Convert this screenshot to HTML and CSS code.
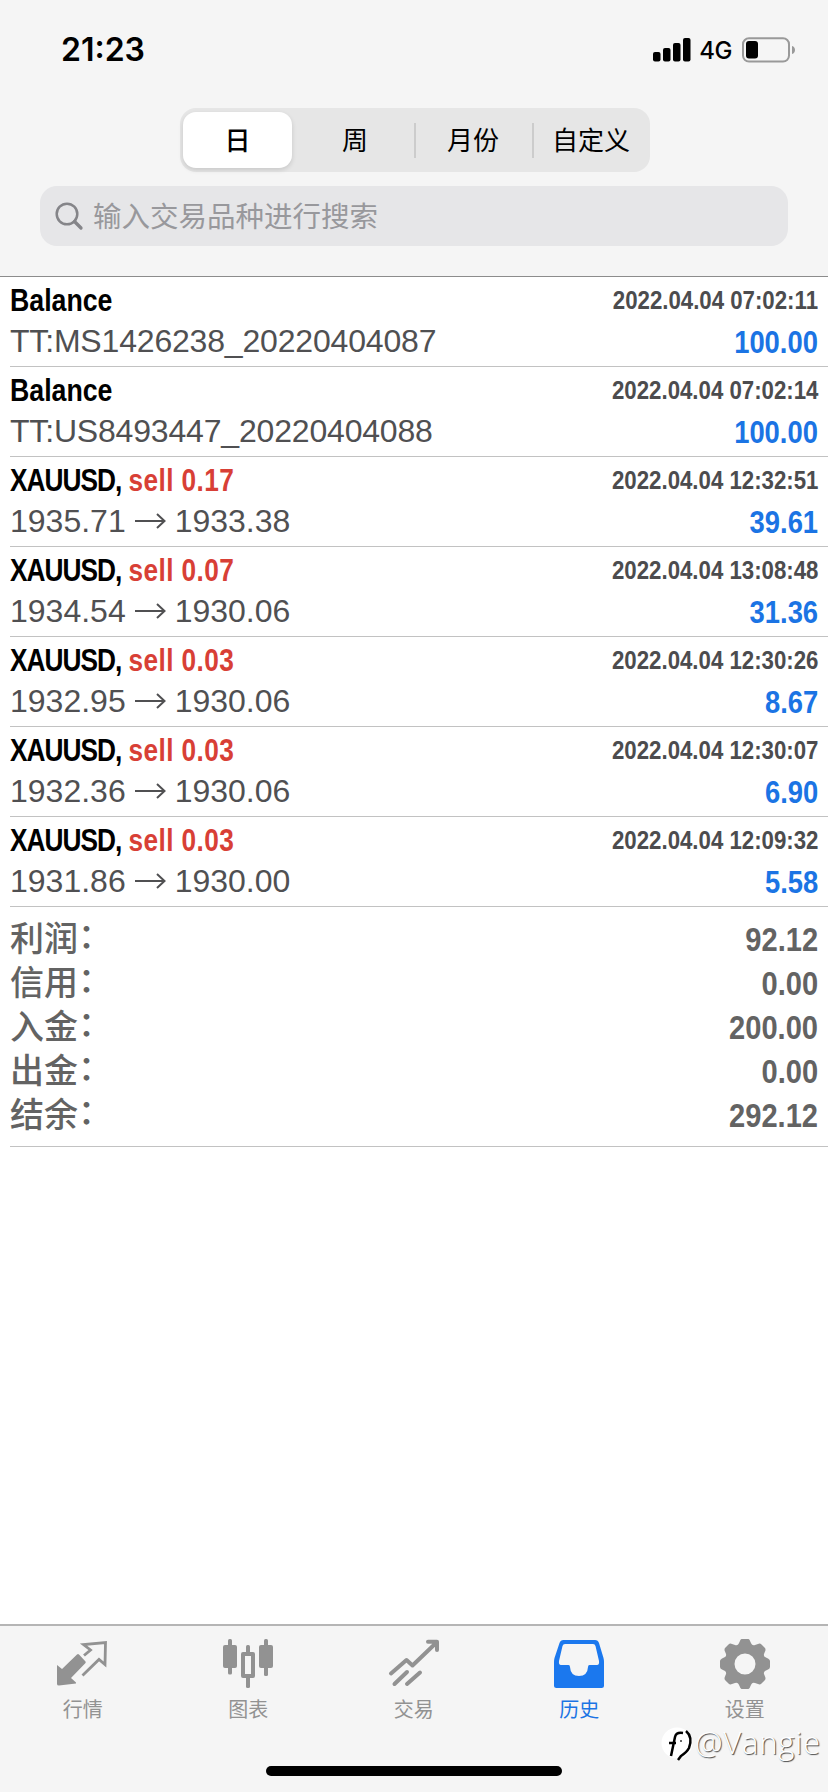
FILE: index.html
```
<!DOCTYPE html>
<html lang="zh-CN">
<head>
<meta charset="utf-8">
<title>历史</title>
<link rel="stylesheet" href="styles.css">
</head>
<body>
<div class="app">
  <header class="header">
    <div class="status">
      <span class="clock">21:23</span>
      <div class="status-right">
        <svg class="signal" width="38" height="24" viewBox="0 0 38 24"><rect x="0" y="14" width="7.5" height="9.500" rx="2"/><rect x="10" y="10" width="7.500" height="13.500" rx="2"/><rect x="20" y="5" width="7.500" height="18.500" rx="2"/><rect x="30" y="0" width="7.500" height="23.500" rx="2"/></svg>
        <span class="network">4G</span>
        <svg class="battery" width="54" height="26" viewBox="0 0 54 26"><rect x="1" y="1.200" width="46" height="23.400" rx="6" fill="none" stroke="#999" stroke-width="2"/><rect x="4" y="4" width="12" height="17.500" rx="3"/><path d="M50 9c4 1 4 7 0 8z" fill="#999"/></svg>
      </div>
    </div>
    <nav class="segments">
      <span class="segment selected">日</span>
      <span class="segment">周</span>
      <span class="segment divided">月份</span>
      <span class="segment divided">自定义</span>
    </nav>
    <div class="search">
      <svg width="30" height="30" viewBox="0 0 30 30" fill="none" stroke="#858589"><circle cx="12" cy="12" r="10.300" stroke-width="2.500"/><path d="M19.500 19.500L26 26" stroke-width="3.300" stroke-linecap="round"/></svg>
      <span>输入交易品种进行搜索</span>
    </div>
  </header>

  <main class="content">
    <section class="deal"><div class="line"><b class="name balance">Balance</b><span class="time">2022.04.04 07:02:11</span></div><div class="line"><span class="detail ref">TT:MS1426238_20220404087</span><span class="amount">100.00</span></div></section>
    <section class="deal"><div class="line"><b class="name balance">Balance</b><span class="time">2022.04.04 07:02:14</span></div><div class="line"><span class="detail ref">TT:US8493447_20220404088</span><span class="amount">100.00</span></div></section>
    <section class="deal"><div class="line"><b class="name"><span class="symbol">XAUUSD,</span> <span class="sell">sell 0.17</span></b><span class="time">2022.04.04 12:32:51</span></div><div class="line"><span class="detail">1935.71<svg class="arrow" viewBox="0 0 32 18"><path d="M1 9H30M23 2L30.500 9L23 16"/></svg>1933.38</span><span class="amount">39.61</span></div></section>
    <section class="deal"><div class="line"><b class="name"><span class="symbol">XAUUSD,</span> <span class="sell">sell 0.07</span></b><span class="time">2022.04.04 13:08:48</span></div><div class="line"><span class="detail">1934.54<svg class="arrow" viewBox="0 0 32 18"><path d="M1 9H30M23 2L30.500 9L23 16"/></svg>1930.06</span><span class="amount">31.36</span></div></section>
    <section class="deal"><div class="line"><b class="name"><span class="symbol">XAUUSD,</span> <span class="sell">sell 0.03</span></b><span class="time">2022.04.04 12:30:26</span></div><div class="line"><span class="detail">1932.95<svg class="arrow" viewBox="0 0 32 18"><path d="M1 9H30M23 2L30.500 9L23 16"/></svg>1930.06</span><span class="amount">8.67</span></div></section>
    <section class="deal"><div class="line"><b class="name"><span class="symbol">XAUUSD,</span> <span class="sell">sell 0.03</span></b><span class="time">2022.04.04 12:30:07</span></div><div class="line"><span class="detail">1932.36<svg class="arrow" viewBox="0 0 32 18"><path d="M1 9H30M23 2L30.500 9L23 16"/></svg>1930.06</span><span class="amount">6.90</span></div></section>
    <section class="deal"><div class="line"><b class="name"><span class="symbol">XAUUSD,</span> <span class="sell">sell 0.03</span></b><span class="time">2022.04.04 12:09:32</span></div><div class="line"><span class="detail">1931.86<svg class="arrow" viewBox="0 0 32 18"><path d="M1 9H30M23 2L30.500 9L23 16"/></svg>1930.00</span><span class="amount">5.58</span></div></section>
    <section class="totals">
      <div class="total"><span>利润<i class="colon">：</i></span><span class="sum">92.12</span></div>
      <div class="total"><span>信用<i class="colon">：</i></span><span class="sum">0.00</span></div>
      <div class="total"><span>入金<i class="colon">：</i></span><span class="sum">200.00</span></div>
      <div class="total"><span>出金<i class="colon">：</i></span><span class="sum">0.00</span></div>
      <div class="total"><span>结余<i class="colon">：</i></span><span class="sum">292.12</span></div>
    </section>
  </main>

  <footer class="tabbar">
    <nav class="tabs">
      <a class="tab"><svg viewBox="0 0 52 52" fill="#929292"><path d="M0 21L5 25L20 10.500Q21 9.500 22 10.500L28.500 17.500Q29 18 28.500 19L14 34L19 38.500V39.500L2 41.500Q0 41.500 0 40Z"/><path d="M27 11.500L33.500 6L26.500 .500L48.500 -1.500L48 20.500L42 15.500L25.500 31.500" fill="none" stroke="#929292" stroke-width="2.800"/></svg><span>行情</span></a>
      <a class="tab"><svg viewBox="0 0 52 52" fill="#929292"><rect x="1" y="1" width="14" height="23" rx="2"/><rect x="6" y="-5" width="4" height="35.500" rx="1.500"/><rect x="37" y="1" width="14" height="23" rx="2"/><rect x="42" y="-5" width="4" height="37" rx="1.500"/><path fill-rule="evenodd" d="M21 8h10q2 0 2 2v22q0 2-2 2H21q-2 0-2-2V10q0-2 2-2M23 12V30H29V12Z"/><rect x="24" y="1" width="4" height="9" rx="1.500"/><rect x="24" y="32" width="4" height="12" rx="1.500"/></svg><span>图表</span></a>
      <a class="tab"><svg viewBox="0 0 52 52" fill="none" stroke="#929292" stroke-width="4" stroke-linecap="round" stroke-linejoin="round"><path d="M3 29.500L18.500 16L24.500 21.500L48 -1M40 -2.200H49V6M6.500 40L19 28M19 40L32 28.500"/></svg><span>交易</span></a>
      <a class="tab active"><svg viewBox="0 0 52 52" fill="#1b78ee"><path fill-rule="evenodd" d="M10.500 -4H42Q45 -4 46 -1L50.500 14Q51 16 51 18V41.500Q51 44 48.500 44H3.500Q1 44 1 41.500V18Q1 16 1.500 14L6.500 -1Q7.500 -4 10.500 -4M12 0Q10 0 9.500 2L6 17Q5.500 21 8 21H15.500Q17 21 17 23Q17.500 32 26 32Q34.500 32 35 23Q35 21 36.500 21H44Q46.500 21 46 17L42.500 2Q42 0 40 0Z"/></svg><span>历史</span></a>
      <a class="tab"><svg viewBox="0 0 52 52"><path fill="#929292" fill-rule="evenodd" d="M22.500 -5H29.500Q30.500 -5 31.500 -2L32.500 0Q34 2 36 1L39 0Q41 -1 42.500 .500L46 4Q47 5.500 46 7.500L45 10Q44.500 12 46 13L49 14.500Q51 15.500 51 17V23Q51 24.500 49 25.500L46 27Q44.500 28 45 30L46 32.500Q47 34.500 46 36L42.500 39.500Q41 41 39 40L36 39Q34 38 32.500 40L31.500 42Q30.500 45 29.500 45H22.500Q21.500 45 20.500 42L19.500 40Q18 38 16 39L13 40Q11 41 9.500 39.500L6 36Q5 34.500 6 32.500L7 30Q7.500 28 6 27L3 25.500Q1 24.500 1 23V17Q1 15.500 3 14.500L6 13Q7.500 12 7 10L6 7.500Q5 5.500 6 4L9.500 .500Q11 -1 13 0L16 1Q18 2 19.500 0L20.500 -2Q21.500 -5 22.500 -5M26 9.500A10.500 10.500 0 1 0 26 30.500A10.500 10.500 0 1 0 26 9.500"/></svg><span>设置</span></a>
    </nav>
    <div class="home"></div>
  </footer>
  <div class="watermark"><svg width="34" height="36" viewBox="0 0 34 36" fill="none"><circle cx="16" cy="16" r="15.500" fill="#fff"/><path d="M10 29L14 10Q15 5 22 6M8 16H15M25 4Q32 10 28 21Q26 25 20 29L17 33" stroke="#000" stroke-width="2.500"/><circle cx="20" cy="14" r="1" fill="#333"/></svg><span>@Vangie</span></div>
</div>
</body>
</html>
```
FILE: styles.css
```
* { box-sizing: border-box; }
body {
  margin: 0;
  font-family: "Liberation Sans", "Noto Sans CJK SC", sans-serif;
  color: #000;
}
.app {
  position: relative;
  display: flex;
  flex-direction: column;
  width: 828px;
  height: 1792px;
  overflow: hidden;
  background: #fff;
}
.header {
  height: 277px;
  background: #f5f5f5;
  border-bottom: 1px solid #8c8c8c;
}
.status {
  display: flex;
  justify-content: space-between;
  align-items: center;
  height: 100px;
  padding: 0 32px 0 61px;
}
.clock { font: 600 32px/1 Inter, sans-serif; }
.status-right { display: flex; align-items: center; }
.network { margin: 2px 10px 0 8px; font: 500 24px/1 Inter, sans-serif; letter-spacing: -.5px; }
.segments {
  display: grid;
  grid-template-columns: 113px repeat(3, 118px);
  width: 470px;
  height: 64px;
  margin: 8px 0 0 180px;
  padding: 4px 3px;
  border-radius: 16px;
  background: #e6e6e6;
}
.segment {
  display: flex;
  align-items: center;
  justify-content: center;
  padding-top: 1px;
  font-size: 26px;
  line-height: 1;
}
.selected {
  width: 109px;
  border-radius: 13px;
  background: #fff;
  box-shadow: 0 2px 5px #0002;
  font-weight: 500;
}
.divided { background: linear-gradient(#ccc, #ccc) 0 center / 2px 35px no-repeat; }
.search {
  display: flex;
  align-items: center;
  gap: 8px;
  width: 748px;
  height: 60px;
  margin: 14px 0 0 40px;
  padding: 2px 14px 0 15px;
  border-radius: 17px;
  background: #e6e6e8;
  color: #98989c;
  font-size: 28.500px;
  line-height: 1;
}
.content { flex: 1; padding: 0 0 0 10px; }
.deal {
  height: 90px;
  padding-top: 2px;
  border-bottom: 1px solid #c2c2c2;
}
.line {
  display: flex;
  justify-content: space-between;
  align-items: center;
  height: 42px;
  padding-right: 10px;
  line-height: 1;
  white-space: nowrap;
}
.line + .line { height: 41px; }
.name {
  font-size: 32px;
  transform: scaleX(.82);
  transform-origin: left;
}
.balance { transform: scaleX(.835); }
.symbol { letter-spacing: -1.200px; }
.sell { color: #d83f36; letter-spacing: .500px; }
.time {
  color: #4c4c4e;
  font-size: 26px;
  font-weight: 700;
  transform: scaleX(.855);
  transform-origin: right;
}
.detail {
  display: flex;
  align-items: center;
  padding-bottom: 2px;
  color: #505052;
  font-size: 32px;
}
.ref { letter-spacing: -.18px; }
.arrow {
  width: 32px;
  height: 18px;
  margin: 0 9px 0 8px;
  fill: none;
  stroke: #505052;
  stroke-width: 2;
}
.amount, .sum {
  font-weight: 700;
  transform: scaleX(.855);
  transform-origin: right;
}
.amount { padding-top: 1px; color: #1b74e4; font-size: 32px; }
.totals {
  height: 240px;
  padding-top: 10px;
  border-bottom: 1px solid #c2c2c2;
}
.total {
  display: flex;
  justify-content: space-between;
  align-items: center;
  height: 44px;
  padding-right: 10px;
  color: #636363;
  font-size: 34px;
  font-weight: 500;
  line-height: 1;
}
.colon { position: relative; top: -3px; font-style: normal; }
.tabbar {
  height: 168px;
  background: #f5f5f5;
  border-top: 2px solid #b5b5b5;
}
.tabs { display: grid; grid-template-columns: repeat(5, 165.500px); height: 140px; }
.tab {
  display: flex;
  flex-direction: column;
  align-items: center;
  padding-top: 18px;
  color: #929292;
  font-size: 20px;
  line-height: 1;
}
.tab svg { width: 52px; height: 52px; overflow: visible; }
.tab span { margin-top: 4px; }
.tab.active { color: #1b74e4; }
.home {
  width: 296px;
  height: 10px;
  margin: 0 auto;
  border-radius: 5px;
  background: #000;
}
.watermark {
  position: absolute;
  left: 661px;
  top: 1727px;
  display: flex;
  align-items: flex-start;
  color: #fff;
  font: 300 31px/1 "Open Sans", "Noto Sans", sans-serif;
  letter-spacing: .8px;
  text-shadow: 1px 1px 1px #444;
}
```
